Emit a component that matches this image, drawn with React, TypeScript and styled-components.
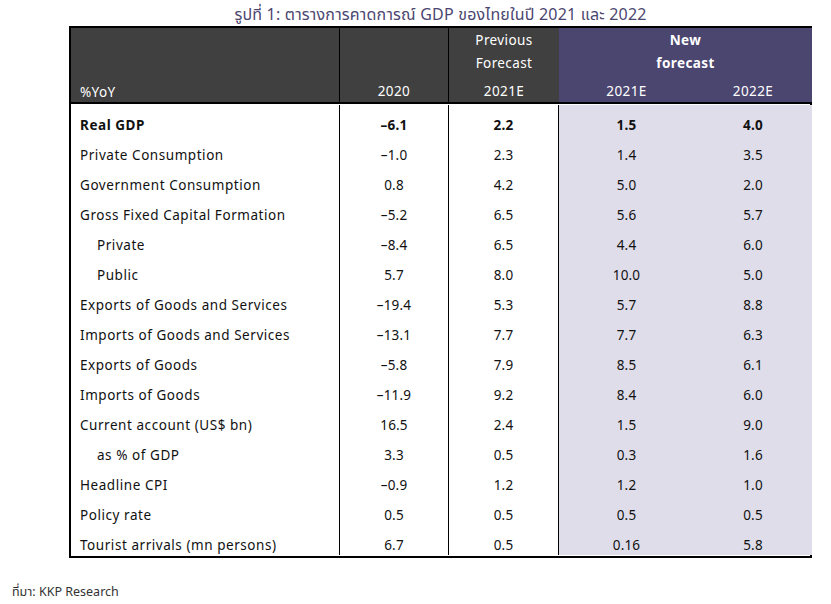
import React from "react";
import styled, { createGlobalStyle, css } from "styled-components";

const GlobalStyle = createGlobalStyle`
  html, body { margin: 0; padding: 0; background: #ffffff; }
  body { font-family: "Noto Sans", "Noto Sans Thai", "Loma", "Garuda", sans-serif; }
`;

const Page = styled.div`
  width: 831px;
  height: 604px;
  position: relative;
  display: flex;
  flex-direction: column;
  padding: 3px 0 0 69px;
  box-sizing: border-box;
`;

const Title = styled.div`
  width: 743px;
  text-align: center;
  color: #4b4670;
  font-size: 16px;
  line-height: 22px;
  height: 22px;
  letter-spacing: 0.2px;
`;

const Table = styled.div`
  width: 743px;
  border: 2px solid #000;
  box-sizing: border-box;
  margin-top: 1px;
`;

const Header = styled.div`
  display: grid;
  grid-template-columns: 269px 109px 110px 253px;
  height: 74px;
  border-bottom: 2px solid #000;
  color: #ffffff;
  font-size: 13.5px;
  letter-spacing: 0.4px;
`;

const HeadCell = styled.div<{ $purple?: boolean; $left?: boolean; $divider?: boolean }>`
  background: ${(p) => (p.$purple ? "#4b4670" : "#404040")};
  display: flex;
  flex-direction: column;
  justify-content: space-between;
  align-items: ${(p) => (p.$left ? "flex-start" : "center")};
  padding: 1px ${(p) => (p.$left ? "0 0 9px" : "0")};
  box-sizing: border-box;
  ${(p) => p.$divider && css`border-right: 1px solid #000;`}
`;

const HeadStack = styled.div<{ $bold?: boolean }>`
  display: flex;
  flex-direction: column;
  align-items: center;
  line-height: 23px;
  font-weight: ${(p) => (p.$bold ? 700 : 400)};
`;

const HeadLabel = styled.div`
  line-height: 20px;
  height: 20px;
`;

const SubLabels = styled.div`
  display: grid;
  grid-template-columns: 135px 118px;
  width: 100%;
  text-align: center;
`;

const Body = styled.div`
  padding: 1px 0 1px;
`;

const Row = styled.div<{ $bold?: boolean }>`
  display: grid;
  grid-template-columns: 269px 109px 110px 135px 118px;
  height: 30px;
  font-size: 13.5px;
  color: #111;
  font-weight: ${(p) => (p.$bold ? 700 : 400)};
`;

const LabelCell = styled.div<{ $indent?: boolean }>`
  padding: 10px 0 0 ${(p) => (p.$indent ? "26px" : "9px")};
  line-height: 20px;
  border-right: 1px solid #000;
  letter-spacing: 0.55px;
  white-space: nowrap;
`;

const ValueCell = styled.div<{ $purple?: boolean; $divider?: boolean }>`
  padding-top: 10px;
  line-height: 20px;
  text-align: center;
  letter-spacing: 0.2px;
  background: ${(p) => (p.$purple ? "#dedde9" : "transparent")};
  ${(p) => p.$divider && css`border-right: 1px solid #000;`}
`;

const Footer = styled.div`
  position: absolute;
  left: 12px;
  top: 583px;
  font-size: 12.5px;
  color: #333;
  line-height: 18px;
`;

type R = { label: string; v: [string, string, string, string]; indent?: boolean; bold?: boolean };

const rows: R[] = [
  { label: "Real GDP", v: ["–6.1", "2.2", "1.5", "4.0"], bold: true },
  { label: "Private Consumption", v: ["–1.0", "2.3", "1.4", "3.5"] },
  { label: "Government Consumption", v: ["0.8", "4.2", "5.0", "2.0"] },
  { label: "Gross Fixed Capital Formation", v: ["–5.2", "6.5", "5.6", "5.7"] },
  { label: "Private", v: ["–8.4", "6.5", "4.4", "6.0"], indent: true },
  { label: "Public", v: ["5.7", "8.0", "10.0", "5.0"], indent: true },
  { label: "Exports of Goods and Services", v: ["–19.4", "5.3", "5.7", "8.8"] },
  { label: "Imports of Goods and Services", v: ["–13.1", "7.7", "7.7", "6.3"] },
  { label: "Exports of Goods", v: ["–5.8", "7.9", "8.5", "6.1"] },
  { label: "Imports of Goods", v: ["–11.9", "9.2", "8.4", "6.0"] },
  { label: "Current account (US$ bn)", v: ["16.5", "2.4", "1.5", "9.0"] },
  { label: "as % of GDP", v: ["3.3", "0.5", "0.3", "1.6"], indent: true },
  { label: "Headline CPI", v: ["–0.9", "1.2", "1.2", "1.0"] },
  { label: "Policy rate", v: ["0.5", "0.5", "0.5", "0.5"] },
  { label: "Tourist arrivals (mn persons)", v: ["6.7", "0.5", "0.16", "5.8"] },
];

export default function App() {
  return (
    <>
      <GlobalStyle />
      <Page>
        <Title>รูปที่ 1: ตารางการคาดการณ์ GDP ของไทยในปี 2021 และ 2022</Title>
        <Table>
          <Header>
            <HeadCell $left $divider>
              <span />
              <HeadLabel>%YoY</HeadLabel>
            </HeadCell>
            <HeadCell $divider>
              <span />
              <HeadLabel>2020</HeadLabel>
            </HeadCell>
            <HeadCell>
              <HeadStack>
                <span>Previous</span>
                <span>Forecast</span>
              </HeadStack>
              <HeadLabel>2021E</HeadLabel>
            </HeadCell>
            <HeadCell $purple>
              <HeadStack $bold>
                <span>New</span>
                <span>forecast</span>
              </HeadStack>
              <SubLabels>
                <HeadLabel>2021E</HeadLabel>
                <HeadLabel>2022E</HeadLabel>
              </SubLabels>
            </HeadCell>
          </Header>
          <Body>
            {rows.map((r) => (
              <Row key={r.label} $bold={r.bold}>
                <LabelCell $indent={r.indent}>{r.label}</LabelCell>
                <ValueCell $divider>{r.v[0]}</ValueCell>
                <ValueCell $divider>{r.v[1]}</ValueCell>
                <ValueCell $purple>{r.v[2]}</ValueCell>
                <ValueCell $purple>{r.v[3]}</ValueCell>
              </Row>
            ))}
          </Body>
        </Table>
        <Footer>ที่มา: KKP Research</Footer>
      </Page>
    </>
  );
}
